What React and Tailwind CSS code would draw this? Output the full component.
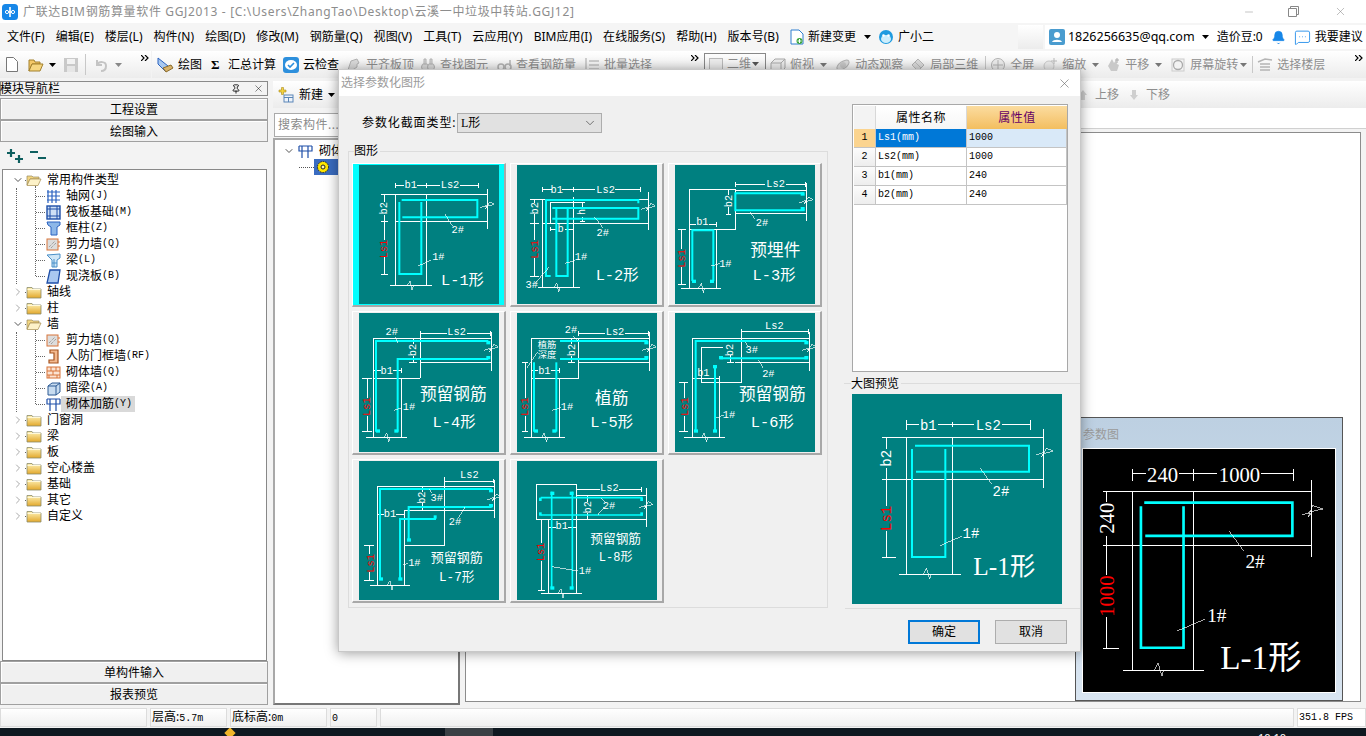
import React from "react";
import { X, Pin, ChevronDown, ChevronRight, Bell, MessageSquareMore, Minus } from "lucide-react";

const MONO = '"Liberation Mono","Noto Sans CJK SC",monospace';
const SERIF = '"Liberation Serif","Noto Sans CJK SC",serif';

const W = ({ d, s = 3 }) => <path d={d} fill="none" stroke="#fff" strokeWidth={s} shapeRendering="crispEdges" />;
const C = ({ d, s = 6 }) => <path d={d} fill="none" stroke="#00ffff" strokeWidth={s} strokeLinejoin="miter" />;
const B = ({ x, y, w = 12, h = 10 }) => <rect x={x} y={y} width={w} height={h} fill="#00ffff" />;
const T = ({ x, y, size = 31, fill = "#fff", anchor = "middle", rot, font = MONO, children }) => (
  <text
    x={x}
    y={y}
    fontSize={size}
    fill={fill}
    textAnchor={anchor}
    dominantBaseline="central"
    fontFamily={font}
    transform={rot ? `rotate(-90 ${x} ${y})` : undefined}
  >
    {children}
  </text>
);
const Brk = ({ x, y }) => <W d={`M${x - 22} ${y + 8}L${x} ${y}L${x - 6} ${y + 12}L${x + 6} ${y - 10}L${x + 20} ${y - 2}L${x - 8} ${y + 6}`} s={2} />;
const BrkB = ({ x, y }) => <W d={`M${x - 8} ${y}L${x} ${y - 14}L${x + 6} ${y + 14}L${x + 10} ${y}`} s={2} />;

const Thumb = ({ vb, children }) => (
  <svg viewBox={`${vb[0]} ${vb[1]} 420 417`} className="w-[140px] h-[139px] bg-[#008080] block">
    {children}
  </svg>
);

const L1 = () => (
  <Thumb vb={[42, 75]}>
    <W d="M151 128V143M245 128V143M400 128V143M151 135H178M216 135H284M344 135H400" />
    <W d="M107 163H428M151 163V437M245 163V437M151 245H428M428 148V268M135 437H260" />
    <W d="M107 245H130M107 403H130M107 163H130M118 163V185M118 224V300M118 352V403" />
    <C d="M170 180H397V232H172" />
    <C d="M163 186V402H229V186" />
    <W d="M300 222L322 258M220 378L258 360" s={2} />
    <BrkB x={195} y={437} />
    <Brk x={428} y={195} />
    <T x={197} y={135}>b1</T>
    <T x={315} y={135}>Ls2</T>
    <T x={118} y={205} rot>b2</T>
    <T x={118} y={327} rot fill="#ff0000">Ls1</T>
    <T x={338} y={270}>2#</T>
    <T x={280} y={352}>1#</T>
    <T x={288} y={422} size={46} anchor="start">L-1形</T>
  </Thumb>
);
const L2 = () => (
  <Thumb vb={[516, 75]}>
    <W d="M592 142V156M685 142V156M885 142V156M592 149H620M652 149H750M810 149H885" />
    <W d="M556 178H911M592 178V442M685 170V442M592 250H911M911 155V270M578 442H705" />
    <W d="M556 250H582M556 408H582M569 178V190M569 222V300M569 355V408" />
    <W d="M615 186H720M615 186V250M705 186H720M705 245H720M712 186V200M712 232V245M615 267H636M660 267H685M615 260V274" />
    <C d="M617 408H603V180H880V190" />
    <C d="M622 204H880V236H622" />
    <C d="M634 204V408H668V204" />
    <W d="M612 382L570 430M748 230L775 265M660 370L690 362" s={2} />
    <BrkB x={635} y={442} />
    <Brk x={911} y={200} />
    <T x={635} y={149}>b1</T>
    <T x={782} y={149}>Ls2</T>
    <T x={569} y={205} rot>b2</T>
    <T x={569} y={328} rot fill="#ff0000">Ls1</T>
    <T x={712} y={216} rot>h</T>
    <T x={647} y={268}>b</T>
    <T x={560} y={435}>3#</T>
    <T x={773} y={280}>2#</T>
    <T x={708} y={350}>1#</T>
    <T x={752} y={408} size={46} anchor="start">L-2形</T>
  </Thumb>
);
const L3 = () => (
  <Thumb vb={[21, 12]}>
    <W d="M202 63V77M412 63V77M202 70H290M355 70H412" />
    <W d="M65 85H202V206H65M65 85V381M145 206V381M202 88H415M202 156H415M415 65V180M40 381H160" />
    <W d="M174 85H190M174 160H190M182 85V102M182 138V160M65 183V197M145 183V197M65 190H85M122 190H145M30 205H55M30 370H55M40 205V265M40 318V370" />
    <C d="M73 360V208H136V360" />
    <C d="M408 97H202V148H410" />
    <B x={72} y={356} />
    <B x={126} y={356} />
    <B x={398} y={94} />
    <B x={398} y={138} />
    <W d="M245 152L262 175M130 315L155 308" s={2} />
    <BrkB x={100} y={381} />
    <Brk x={415} y={118} />
    <T x={103} y={184}>b1</T>
    <T x={323} y={68}>Ls2</T>
    <T x={182} y={120} rot>b2</T>
    <T x={43} y={292} rot fill="#ff0000">Ls1</T>
    <T x={282} y={185}>2#</T>
    <T x={172} y={308}>1#</T>
    <T x={322} y={272} size={50}>预埋件</T>
    <T x={318} y={344} size={46}>L-3形</T>
  </Thumb>
);
const L4 = () => (
  <Thumb vb={[42, 24]}>
    <W d="M226 78V92M436 78V92M226 85H305M365 85H436" />
    <W d="M85 100H440M85 100V397M170 220V397M85 220H226M226 85V220M226 172H440M440 80V197M63 397H185" />
    <W d="M193 172H215M204 100V118M204 152V172M85 197H108M145 197H170M170 190V205M52 220H80M52 380H80M66 220V280M66 332V380" />
    <C d="M93 380V108H430" />
    <C d="M158 380V162H430" />
    <B x={93} y={373} />
    <B x={148} y={373} />
    <B x={424} y={108} />
    <B x={424} y={153} />
    <W d="M150 95L160 115M148 316L172 308" s={2} />
    <BrkB x={125} y={397} />
    <Brk x={440} y={128} />
    <T x={335} y={82}>Ls2</T>
    <T x={140} y={80}>2#</T>
    <T x={204} y={135} rot>b2</T>
    <T x={125} y={197}>b1</T>
    <T x={66} y={305} rot fill="#ff0000">Ls1</T>
    <T x={192} y={307}>1#</T>
    <T x={325} y={270} size={50}>预留钢筋</T>
    <T x={327} y={354} size={46}>L-4形</T>
  </Thumb>
);
const L5 = () => (
  <Thumb vb={[516, 24]}>
    <W d="M700 78V92M910 78V92M700 85H780M840 85H910" />
    <W d="M560 100H914M700 100V220H560M560 100V397M644 220V397M700 172H914M914 80V197M537 397H660" />
    <W d="M670 172H690M680 100V118M680 152V172M560 197H580M618 197H644M644 190V205M530 172H550M530 380H548M540 172V280M540 332V380" />
    <C d="M567 380V172" />
    <C d="M634 172V380" />
    <C d="M645 108H908" />
    <C d="M645 162H908" />
    <B x={567} y={373} />
    <B x={622} y={373} />
    <B x={898} y={108} />
    <B x={898} y={153} />
    <W d="M578 140L545 190M684 92L698 108M622 316L648 308" s={2} />
    <BrkB x={598} y={397} />
    <Brk x={914} y={128} />
    <T x={810} y={82}>Ls2</T>
    <T x={678} y={76}>2#</T>
    <T x={680} y={135} rot>b2</T>
    <T x={598} y={197}>b1</T>
    <T x={606} y={122} size={28}>植筋</T>
    <T x={606} y={152} size={28}>深度</T>
    <T x={540} y={305} rot fill="#ff0000">Ls1</T>
    <T x={666} y={307}>1#</T>
    <T x={800} y={282} size={50}>植筋</T>
    <T x={800} y={354} size={46}>L-5形</T>
  </Thumb>
);
const L6 = () => (
  <Thumb vb={[990, 24]}>
    <W d="M1190 73V87M1390 73V87M1190 80H1390" />
    <W d="M1043 100H1394M1043 100V397M1190 72V232H1070V127H1135M1170 172H1394M1394 80V197M1123 212V397M1043 220H1123M1017 397H1140" />
    <W d="M1145 172H1166M1155 150V172M1003 232H1030M1003 380H1030M1017 232V280M1017 332V380" />
    <C d="M1052 380V108H1385" />
    <C d="M1110 380V182" />
    <C d="M1125 160H1388" />
    <B x={1047} y={373} />
    <B x={1104} y={373} />
    <B x={1104} y={180} />
    <B x={1122} y={153} />
    <B x={1378} y={108} />
    <B x={1378} y={153} />
    <W d="M1200 110L1210 125M1240 165L1255 190M1112 340L1136 330" s={2} />
    <BrkB x={1078} y={397} />
    <Brk x={1394} y={128} />
    <T x={1288} y={63}>Ls2</T>
    <T x={1155} y={135} rot>b2</T>
    <T x={1220} y={135}>3#</T>
    <T x={1270} y={207}>2#</T>
    <T x={1075} y={203}>b1</T>
    <T x={1020} y={305} rot fill="#ff0000">Ls1</T>
    <T x={1152} y={330}>1#</T>
    <T x={1282} y={270} size={50}>预留钢筋</T>
    <T x={1282} y={354} size={46}>L-6形</T>
  </Thumb>
);
const L7 = () => (
  <Thumb vb={[42, 468]}>
    <W d="M298 521V535M444 521V535M298 528H444" />
    <W d="M97 545H448M97 545V841M448 525V640M178 617H448M178 617V841M298 517V720H178M75 841H195" />
    <W d="M220 617H242M231 545V562M231 595V617M97 628H118M152 628H178M178 620V636M58 720H86M58 826H86M72 720V748M72 800V826" />
    <C d="M105 822V552H440" />
    <C d="M165 822V642H273" />
    <C d="M191 705V606H440" />
    <B x={102} y={817} />
    <B x={160} y={817} />
    <B x={186} y={700} />
    <B x={266} y={631} w={9} />
    <B x={432} y={552} />
    <B x={432} y={597} />
    <W d="M252 552L262 565M360 606L340 640M175 780L190 775" s={2} />
    <BrkB x={135} y={841} />
    <Brk x={448} y={577} />
    <T x={373} y={510}>Ls2</T>
    <T x={231} y={578} rot>b2</T>
    <T x={275} y={578}>3#</T>
    <T x={330} y={652}>2#</T>
    <T x={135} y={628}>b1</T>
    <T x={77} y={775} rot fill="#ff0000">Ls1</T>
    <T x={208} y={775}>1#</T>
    <T x={335} y={759} size={39}>预留钢筋</T>
    <T x={335} y={817} size={38}>L-7形</T>
  </Thumb>
);
const L8 = () => (
  <Thumb vb={[516, 468]}>
    <W d="M890 546V560M694 553H765M822 553H890" />
    <W d="M574 538H694V643H574ZM694 571H904M694 643H904M904 550V665M611 643V865M694 643V865M588 865H710" />
    <W d="M718 571H738M718 643H738M728 571V590M728 625V643M611 663V671M611 668H632M668 668H694M580 643H600M580 855H600M590 643V715M590 768V855" />
    <C d="M620 560V850" s={5} />
    <C d="M682 560V850" s={5} />
    <C d="M587 578H893" s={5} />
    <C d="M587 630H893" s={5} />
    <B x={616} y={844} />
    <B x={674} y={844} />
    <B x={616} y={560} />
    <B x={674} y={560} />
    <B x={582} y={578} w={8} />
    <B x={886} y={578} w={8} />
    <B x={582} y={622} w={8} />
    <B x={886} y={622} w={8} />
    <W d="M620 785L700 798M768 580L782 594M758 630L778 606" s={2} />
    <BrkB x={648} y={865} />
    <Brk x={904} y={600} />
    <T x={793} y={548}>Ls2</T>
    <T x={728} y={607} rot>b2</T>
    <T x={792} y={602}>2#</T>
    <T x={650} y={663}>b1</T>
    <T x={588} y={741} rot fill="#ff0000">Ls1</T>
    <T x={720} y={798}>1#</T>
    <T x={812} y={702} size={38}>预留钢筋</T>
    <T x={812} y={760} size={36}>L-8形</T>
  </Thumb>
);

const Preview = () => (
  <svg viewBox="21 57 630 630" className="w-[210px] h-[210px] block bg-[#008080]">
    <W d="M185 135V165M322 140V155M557 135V165M185 148H222M280 148H386M472 148H557" />
    <W d="M185 187V598M322 187V598M112 187H596M596 162V340M112 312H596M112 547H152M162 598H348" />
    <W d="M125 187V222M125 280V392M125 468V547" />
    <C d="M210 212H552V290H213" s={6} />
    <C d="M201 222V546H301V222" s={6} />
    <W d="M406 280L440 327M285 512L350 484" s={2} />
    <W d="M234 598L245 580L254 612L258 598" s={2} />
    <W d="M574 240L596 232L590 246L604 220L624 228L590 238" s={2} />
    <T x={250} y={152} size={42}>b1</T>
    <T x={430} y={152} size={42}>Ls2</T>
    <T x={125} y={250} size={42} rot>b2</T>
    <T x={125} y={430} size={42} rot fill="#ff0000">Ls1</T>
    <T x={468} y={352} size={42}>2#</T>
    <T x={378} y={476} size={42}>1#</T>
    <T x={385} y={572} size={76} anchor="start" font={SERIF}>L-1形</T>
  </svg>
);

const BlackPic = () => (
  <svg viewBox="23 120 757 730" className="w-[252px] h-[243px] block bg-black border border-white box-content -mt-[1px] -ml-[1px]">
    <W d="M172 180V215M355 180V215M655 180V215M172 195H212M312 195H426M558 195H655" />
    <W d="M172 247V785M355 247V785M82 247H710M710 213V445M82 410H710M82 718H132M142 785H387" />
    <W d="M95 247V278M95 380V498M95 625V718" />
    <C d="M207 281H652V381H210" s={8} />
    <C d="M197 292V717H325V292" s={8} />
    <W d="M462 367L505 425M305 667L388 632" s={2} />
    <W d="M238 785L248 762L260 803L265 785" s={2} />
    <W d="M680 317L710 312L700 325L712 290L745 300L700 310" s={2} />
    <T x={262} y={197} size={62} font={SERIF}>240</T>
    <T x={493} y={197} size={62} font={SERIF}>1000</T>
    <T x={95} y={328} size={62} rot font={SERIF}>240</T>
    <T x={95} y={562} size={62} rot fill="#ff0000" font={SERIF}>1000</T>
    <T x={540} y={458} size={58} font={SERIF}>2#</T>
    <T x={425} y={620} size={58} font={SERIF}>1#</T>
    <T x={435} y={745} size={100} anchor="start" font={SERIF}>L-1形</T>
  </svg>
);

/* ---------- small icons ---------- */
const Folder = ({ open }) => (
  <svg viewBox="0 0 16 14" className="w-[16px] h-[14px] shrink-0">
    <defs>
      <linearGradient id="fg" x1="0" y1="0" x2="0" y2="1">
        <stop offset="0" stopColor="#fff3b8" />
        <stop offset="1" stopColor="#e2a82c" />
      </linearGradient>
    </defs>
    {open ? (
      <>
        <path d="M1 3h5l1 1h6v2H4L1 12z" fill="#f3d681" stroke="#9a8b5f" strokeWidth=".7" />
        <path d="M4 6h11l-3 6.5H1z" fill="#fdf2c8" stroke="#a68e4f" strokeWidth=".7" />
      </>
    ) : (
      <>
        <path d="M1 2.5h5l1 1.5h8v9H1z" fill="url(#fg)" stroke="#8b8b6a" strokeWidth=".8" />
        <path d="M1.5 4.5h13" stroke="#fff8d8" strokeWidth="1" />
      </>
    )}
  </svg>
);
const Sq = ({ children }) => <svg viewBox="0 0 15 15" className="w-[15px] h-[15px] shrink-0">{children}</svg>;
const IGrid = () => <Sq><path d="M2 1v13M6 1v13M10 1v13M1 3h13M1 7h13M1 11h13" stroke="#2b62c0" strokeWidth="1.2" fill="none" /></Sq>;
const IRaft = () => <Sq><rect x="1" y="1" width="13" height="13" fill="#cfe0f5" stroke="#1f4fa8" strokeWidth="1.4" /><path d="M4 1v13M11 1v13M1 4h13M1 11h13" stroke="#1f4fa8" fill="none" /></Sq>;
const ICol = () => <Sq><path d="M1 1h13v3l-3 2v8H5V6L2 4z" fill="#8db7e8" stroke="#2b62c0" /></Sq>;
const IShear = () => <Sq><rect x="1" y="2" width="11" height="11" fill="#ddd" stroke="#d8753a" /><path d="M3 10l6-6M5 11l5-5" stroke="#888" strokeDasharray="1 1" /><path d="M13 4v2M13 8v2" stroke="#d8753a" /></Sq>;
const IBeam = () => <Sq><path d="M1 2l13-1v4l-3 2v7H6V7z" fill="#cfe6f7" stroke="#4a90c8" /><path d="M8 6v8M6 10h5" stroke="#4a90c8" /></Sq>;
const ISlab = () => <Sq><path d="M4 1h10l-2 13H1z" fill="#a9c8f0" stroke="#1f4fa8" strokeWidth="1.3" /></Sq>;
const IDoor = () => <Sq><path d="M4 1h8v13H3v-3h5V4H4z" fill="#f3b98f" stroke="#a65420" strokeWidth="1.2" /></Sq>;
const IBrick = () => <Sq><rect x="1" y="2" width="13" height="11" fill="#fbe3d2" stroke="#d8753a" /><path d="M1 6h13M1 10h13M5 2v4M10 2v4M7 6v4M3 10v3M11 10v3" stroke="#d8753a" fill="none" /></Sq>;
const IDark = () => <Sq><path d="M2 5l4-3h8v9l-4 3H2z" fill="#c8dcf0" stroke="#2c5a94" /><path d="M2 5h8v9M10 5l4-3" stroke="#2c5a94" fill="none" /></Sq>;
const IRebar = () => <Sq><path d="M1 2h13M2 7h12M4 2v12M10 2v12M1 2v5h13V2" stroke="#1f4fa8" strokeWidth="1.2" fill="none" /></Sq>;

const Dotted = ({ className }) => <div className={className} />;

const Row = ({ icon, name, suf, selected }) => (
  <div className="h-[16px] flex items-center relative pl-[33px]">
    <div className="w-[9px] border-t border-dotted border-[#666]" />
    <div className="ml-[1px]">{icon}</div>
    <div className={`h-[16px] flex items-center pl-[5px] pr-[3px] text-[12px] text-black ${selected ? "bg-[#d9d9d9]" : ""}`}>
      <span>{name}</span>
      <span className="font-['Liberation_Mono'] text-[10px]">{suf}</span>
    </div>
  </div>
);
const Node = ({ open, name }) => (
  <div className="h-[16px] flex items-center pl-[9px] text-[12px] text-black">
    {open ? <ChevronDown size={12} strokeWidth={2} className="text-[#555]" /> : <ChevronRight size={12} strokeWidth={2} className="text-[#aaa]" />}
    <div className="w-[1px] ml-[1px] border-t border-dotted border-[#666]" />
    <Folder open={open} />
    <span className="ml-[5px]">{name}</span>
  </div>
);

const Tree = () => (
  <div className="pt-[2px]">
    <div className="relative">
      <Node open name="常用构件类型" />
      <Dotted className="absolute left-[13px] top-[16px] bottom-0 border-l border-dotted border-[#666]" />
      <Dotted className="absolute left-[32px] top-[14px] bottom-[8px] border-l border-dotted border-[#666]" />
      <Row icon={<IGrid />} name="轴网" suf="(J)" />
      <Row icon={<IRaft />} name="筏板基础" suf="(M)" />
      <Row icon={<ICol />} name="框柱" suf="(Z)" />
      <Row icon={<IShear />} name="剪力墙" suf="(Q)" />
      <Row icon={<IBeam />} name="梁" suf="(L)" />
      <Row icon={<ISlab />} name="现浇板" suf="(B)" />
    </div>
    <Node name="轴线" />
    <Node name="柱" />
    <div className="relative">
      <Node open name="墙" />
      <Dotted className="absolute left-[13px] top-[16px] bottom-0 border-l border-dotted border-[#666]" />
      <Dotted className="absolute left-[32px] top-[14px] bottom-[8px] border-l border-dotted border-[#666]" />
      <Row icon={<IShear />} name="剪力墙" suf="(Q)" />
      <Row icon={<IDoor />} name="人防门框墙" suf="(RF)" />
      <Row icon={<IBrick />} name="砌体墙" suf="(Q)" />
      <Row icon={<IDark />} name="暗梁" suf="(A)" />
      <Row icon={<IRebar />} name="砌体加筋" suf="(Y)" selected />
    </div>
    {["门窗洞", "梁", "板", "空心楼盖", "基础", "其它", "自定义"].map((n) => (
      <Node key={n} name={n} />
    ))}
  </div>
);

const NavBtn = ({ children }) => (
  <div className="h-[22px] flex items-center justify-center pt-[1px] text-[12px] text-black bg-[#f0f0f0] border border-[#a0a0a0] shadow-[inset_1px_1px_0_#fff]">
    {children}
  </div>
);

/* ---------- toolbars ---------- */
const Caret = ({ className = "" }) => (
  <svg viewBox="0 0 7 4" className={`w-[7px] h-[4px] shrink-0 ${className}`}>
    <path d="M0 0h7L3.5 4z" fill="currentColor" />
  </svg>
);
const Tool = ({ icon, text, dis = true, className = "", caret, caretClass = "ml-[5px]" }) => (
  <div className={`flex items-center shrink-0 text-[12px] ${dis ? "text-[#8e8e8e]" : "text-black"} ${className}`}>
    {icon}
    <span className="ml-[4px] whitespace-nowrap">{text}</span>
    {caret && <Caret className={`${caretClass} ${dis ? "text-[#777]" : "text-black"}`} />}
  </div>
);
const G = ({ children }) => <svg viewBox="0 0 16 16" className="w-[16px] h-[16px] shrink-0">{children}</svg>;
const gs = { fill: "#dcdcdc", stroke: "#b4b4b4" };
const Gray = {
  flat: <G><path d="M2 13l3-9 6-2 2 4-2 1v3l-6 4z" {...gs} /></G>,
  find: <G><circle cx="5" cy="10" r="3.5" {...gs} /><circle cx="11" cy="10" r="3.5" {...gs} /><path d="M4 2h2v5H4zM10 2h2v5h-2z" {...gs} /></G>,
  view: <G><circle cx="5" cy="10" r="3" fill="none" stroke="#b4b4b4" strokeWidth="1.5" /><circle cx="12" cy="10" r="3" fill="none" stroke="#b4b4b4" strokeWidth="1.5" /><path d="M14 3v6" stroke="#b4b4b4" strokeWidth="1.5" /></G>,
  batch: <G><path d="M1 1h2v14H1zM5 3h10v2H5zM5 7h10v2H5zM5 11h10v2H5z" fill="#cfcfcf" /></G>,
  two: <G><rect x="1.5" y="2.5" width="13" height="12" fill="#eee" stroke="#bbb" /></G>,
  cube: <G><path d="M1 6l4-4h10v9l-4 4H1z" fill="#eee" stroke="#aaa" /><path d="M1 6h10v9M11 6l4-4" fill="none" stroke="#aaa" /></G>,
  orbit: <G><ellipse cx="8" cy="8" rx="7" ry="3.5" transform="rotate(-35 8 8)" {...gs} /><circle cx="8" cy="8" r="3" fill="#c8c8c8" /></G>,
  local: <G><path d="M2 8l6-6 6 6-6 6z" {...gs} /><path d="M5 5l6 6M8 2l6 6M2 8l6 6" stroke="#bbb" fill="none" /></G>,
  full: <G><circle cx="8" cy="8" r="6.5" fill="#eee" stroke="#b4b4b4" /><path d="M8 3v10M3 8h10" stroke="#b4b4b4" /></G>,
  zoom: <G><circle cx="7" cy="9" r="5" fill="#eee" stroke="#ccc" /><path d="M12 1v6M9 4h6" stroke="#bbb" /></G>,
  pan: <G><path d="M3 9l3 5h6l2-6-2-1-1-4-2 3-2-4z" fill="#c9c9c9" /><path d="M12 1v5M10 3h4" stroke="#aaa" /></G>,
  rot: <G><rect x="2" y="2" width="12" height="12" fill="#f2f2f2" stroke="#ccc" /><circle cx="8" cy="8" r="4.5" fill="none" stroke="#aaa" strokeWidth="1.3" /></G>,
  floor: <G><path d="M1 5l7-3 7 1M3 7h10M3 10h10M3 13h10" stroke="#b4b4b4" strokeWidth="1.4" fill="none" /></G>,
  up: <G><path d="M8 3l4 5H10v5H6V8H4z" fill="#cfcfcf" /></G>,
  down: <G><path d="M8 13l4-5H10V3H6v5H4z" fill="#cfcfcf" /></G>,
};
const Dbl = ({ className = "" }) => (
  <svg viewBox="0 0 8 6" className={`w-[8px] h-[6px] shrink-0 self-start mt-[4px] ${className}`}>
    <path d="M0 0l3 3-3 3M4 0l3 3-3 3" fill="none" stroke="#000" strokeWidth="1.2" />
  </svg>
);
const Sep = ({ className = "" }) => <div className={`w-px h-[17px] bg-[#c8c8c8] shrink-0 ${className}`} />;

const MenuItem = ({ children }) => <span className="mr-[11px] whitespace-nowrap tracking-[0.05px]">{children}</span>;

const Cell = ({ children, className = "" }) => (
  <div className={`h-[19px] flex items-center border-b border-r border-[#c4c4c4] pl-[2px] font-['Liberation_Mono','Noto_Sans_CJK_SC',monospace] text-[10px] text-black ${className}`}>
    {children}
  </div>
);

const Tile = ({ sel, children }) => (
  <div className={`w-[154px] h-[144px] pl-[6px] pt-[1px] border-t border-l border-white border-r-2 border-b-2 border-r-[#a8a8a8] border-b-[#a8a8a8] ${sel ? "bg-[#00ffff]" : "bg-[#f0f0f0]"}`}>
    {children}
  </div>
);

const Dialog = () => (
  <div className="absolute left-[338px] top-[69px] w-[743px] h-[583px] bg-[#f0f0f0] border border-[#c8c8c8] shadow-[0_1px_12px_rgba(0,0,0,0.4)] flex flex-col">
    <div className="h-[26px] bg-white flex items-center justify-between pl-[2px] pr-[8px] shrink-0 text-[12px] text-[#9b9b9b]">
      <span>选择参数化图形</span>
      <X size={15} strokeWidth={1} className="text-[#666]" />
    </div>
    <div className="flex h-[512px] shrink-0">
      <div className="w-[490px] ml-[9px] shrink-0">
        <div className="mt-[17px] ml-[14px] flex items-center h-[20px] text-[12px] text-black">
          <span className="w-[95px] whitespace-nowrap tracking-[0.9px]">参数化截面类型:</span>
          <div className="w-[145px] h-[20px] bg-[#e1e1e1] border border-[#adadad] flex items-center justify-between pl-[3px] pr-[4px]">
            <span><span className="font-['Liberation_Serif']">L</span>形</span>
            <ChevronDown size={14} strokeWidth={1.2} className="text-[#444]" />
          </div>
        </div>
        <div className="relative mt-[18px] h-[457px] w-[480px] border border-[#dcdcdc] pl-[3px] pt-[11px]">
          <span className="absolute -top-[8px] left-[5px] bg-[#f0f0f0] pr-[2px] text-[12px] leading-[14px] text-black">图形</span>
          <div className="grid grid-cols-[154px_154px_154px] gap-x-[4px] gap-y-[4px]">
            <Tile sel><L1 /></Tile>
            <Tile><L2 /></Tile>
            <Tile><L3 /></Tile>
            <Tile><L4 /></Tile>
            <Tile><L5 /></Tile>
            <Tile><L6 /></Tile>
            <Tile><L7 /></Tile>
            <Tile><L8 /></Tile>
          </div>
        </div>
      </div>
      <div className="flex-1 pt-[8px]">
        <div className="ml-[14px] w-[216px] h-[268px] border border-[#a8a8a8] p-[1px] bg-white">
          <div className="grid grid-cols-[22px_91px_100px]">
            <div className="h-[23px] bg-[#f3f3f3] border-r border-[#d8d8d8]" />
            <div className="h-[23px] flex items-center justify-center bg-gradient-to-b from-white to-[#f6f6f6] border-r border-[#d8d8d8] text-[12px] tracking-[0.5px] text-black">属性名称</div>
            <div className="h-[23px] flex items-center justify-center bg-gradient-to-b from-[#fbdc9f] to-[#f3be5e] text-[12px] tracking-[0.5px] text-[#660066]">属性值</div>
            <Cell className="justify-center !pl-0 bg-[#fbd48f] text-[#660066]">1</Cell>
            <Cell className="bg-[#0078d7] text-white">Ls1(mm)</Cell>
            <Cell className="bg-[#d9e9f8]">1000</Cell>
            <Cell className="justify-center !pl-0 bg-gradient-to-b from-[#fcfcfc] to-[#ededed]">2</Cell>
            <Cell>Ls2(mm)</Cell>
            <Cell>1000</Cell>
            <Cell className="justify-center !pl-0 bg-gradient-to-b from-[#fcfcfc] to-[#ededed]">3</Cell>
            <Cell>b1(mm)</Cell>
            <Cell>240</Cell>
            <Cell className="justify-center !pl-0 bg-gradient-to-b from-[#fcfcfc] to-[#ededed]">4</Cell>
            <Cell>b2(mm)</Cell>
            <Cell>240</Cell>
          </div>
        </div>
        <div className="relative ml-[6px] mt-[11px] border-t border-[#dcdcdc] pl-[8px] pt-[10px]">
          <span className="absolute -top-[7px] left-[7px] bg-[#f0f0f0] pr-[2px] text-[12px] leading-[14px] text-black">大图预览</span>
          <Preview />
        </div>
      </div>
    </div>
    <div className="ml-[506px] flex-1 border-t border-[#dcdcdc] pt-[11px] flex">
      <div className="ml-[63px] w-[72px] h-[24px] bg-[#e1e1e1] border-2 border-[#0078d7] flex items-center justify-center text-[12px] text-black">确定</div>
      <div className="ml-[15px] w-[72px] h-[24px] bg-[#e1e1e1] border border-[#adadad] flex items-center justify-center text-[12px] text-black">取消</div>
    </div>
  </div>
);

export default function App() {
  return (
    <div className="relative w-[1366px] h-[736px] overflow-hidden flex flex-col bg-[#f3f3f3] font-['Noto_Sans','Noto_Sans_CJK_SC',sans-serif] leading-none">
      {/* title bar */}
      <div className="h-[23px] bg-white flex items-center shrink-0 relative">
        <svg viewBox="0 0 16 16" className="w-[16px] h-[16px] ml-[2px] shrink-0">
          <rect width="16" height="16" rx="3.5" fill="#1787e8" />
          <path d="M8 3v10M3.5 8h9" stroke="#fff" strokeWidth="1.6" />
          <circle cx="5" cy="8" r="1.6" fill="#1787e8" stroke="#fff" />
          <circle cx="11" cy="8" r="1.6" fill="#1787e8" stroke="#fff" />
        </svg>
        <span className="ml-[5px] text-[12px] tracking-[0.65px] text-[#8d8d8d] whitespace-nowrap">
          广联达BIM钢筋算量软件 GGJ2013 - [C:\Users\ZhangTao\Desktop\云溪一中垃圾中转站.GGJ12]
        </span>
        <div className="ml-auto flex items-center text-[#888]">
          <Minus size={12} strokeWidth={1} className="mr-[33px]" />
          <svg viewBox="0 0 11 11" className="w-[11px] h-[11px] mr-[35px]">
            <path d="M.5 2.5h8v8h-8zM2.5 2.5v-2h8v8h-2" fill="none" stroke="currentColor" />
          </svg>
          <X size={13} strokeWidth={1} className="mr-[19px]" />
        </div>
      </div>
      {/* menu bar */}
      <div className="h-[28px] shrink-0 bg-[#f5f5f5] flex items-center pl-[7px] text-[12px] text-black">
        <MenuItem>文件(F)</MenuItem>
        <MenuItem>编辑(E)</MenuItem>
        <MenuItem>楼层(L)</MenuItem>
        <MenuItem>构件(N)</MenuItem>
        <MenuItem>绘图(D)</MenuItem>
        <MenuItem>修改(M)</MenuItem>
        <MenuItem>钢筋量(Q)</MenuItem>
        <MenuItem>视图(V)</MenuItem>
        <MenuItem>工具(T)</MenuItem>
        <MenuItem>云应用(Y)</MenuItem>
        <MenuItem>BIM应用(I)</MenuItem>
        <MenuItem>在线服务(S)</MenuItem>
        <MenuItem>帮助(H)</MenuItem>
        <MenuItem>版本号(B)</MenuItem>
        <svg viewBox="0 0 16 16" className="w-[16px] h-[16px] shrink-0 -ml-[1px]">
          <path d="M2 1h8l4 4v10H2z" fill="#fff" stroke="#2f7fd0" />
          <circle cx="10.5" cy="12" r="3" fill="#3ba53b" />
          <path d="M10.5 10v4M8.5 12h4" stroke="#fff" />
        </svg>
        <span className="ml-[3px] whitespace-nowrap">新建变更</span>
        <Caret className="ml-[8px]" />
        <svg viewBox="0 0 16 16" className="w-[16px] h-[16px] ml-[7px] shrink-0">
          <circle cx="8" cy="8" r="7" fill="#1f9be0" />
          <ellipse cx="8" cy="10" rx="5" ry="4" fill="#cdeefc" />
          <circle cx="5.5" cy="6.5" r="1.3" fill="#fff" />
          <circle cx="10.5" cy="6.5" r="1.3" fill="#fff" />
        </svg>
        <span className="ml-[4px] whitespace-nowrap">广小二</span>
        <div className="ml-[84px] w-[25px] h-[24px] shrink-0 bg-gradient-to-b from-white to-[#ececec]" />
        <div className="ml-[2px] flex-1 min-w-0 h-[24px] bg-white flex items-center pl-[4px]">
          <svg viewBox="0 0 16 16" className="w-[16px] h-[16px] shrink-0">
            <rect width="16" height="16" rx="2" fill="#4a9ccf" />
            <circle cx="8" cy="6" r="3" fill="#fff" />
            <path d="M3 13c1-3 9-3 10 0z" fill="#fff" />
          </svg>
          <span className="ml-[3px] text-[12.5px] whitespace-nowrap">1826256635@qq.com</span>
          <Caret className="ml-[7px]" />
          <span className="ml-[8px] whitespace-nowrap">造价豆:0</span>
          <Bell size={15} fill="#1787e8" strokeWidth={1} className="ml-[8px] text-[#1787e8] shrink-0" />
          <MessageSquareMore size={17} strokeWidth={1.2} className="ml-[8px] text-[#1787e8] shrink-0" />
          <span className="ml-[4px] whitespace-nowrap">我要建议</span>
        </div>
      </div>
      {/* toolbar */}
      <div className="h-[27px] shrink-0 flex items-center bg-gradient-to-b from-white to-[#ececec]">
        <div className="w-[152px] h-full flex items-center pl-[6px] shrink-0 border-r border-[#f3f3f3]">
          <svg viewBox="0 0 12 15" className="w-[12px] h-[15px] shrink-0">
            <path d="M.5.5h7l4 4v10H.5z" fill="#fff" stroke="#777" />
          </svg>
          <svg viewBox="0 0 16 14" className="w-[16px] h-[14px] ml-[10px] shrink-0">
            <path d="M1 2h5l1 2h5v2H4L1 13z" fill="#f4c868" stroke="#a2802c" />
            <path d="M4 6h11l-3 7H1z" fill="#f6d680" stroke="#a2802c" />
          </svg>
          <Caret className="ml-[5px]" />
          <svg viewBox="0 0 14 14" className="w-[14px] h-[14px] ml-[8px] shrink-0">
            <rect width="14" height="14" fill="#c9c9c9" />
            <rect x="3" y="1" width="8" height="5" fill="#f2f2f2" />
            <rect x="3" y="8" width="8" height="6" fill="#e6e6e6" />
          </svg>
          <Sep className="ml-[7px] h-[21px]" />
          <svg viewBox="0 0 14 14" className="w-[14px] h-[14px] ml-[8px] shrink-0">
            <path d="M3 2v5h5M3 7c2-4 9-4 9 1 0 3-2 5-5 5" fill="none" stroke="#c4c4c4" strokeWidth="2" />
          </svg>
          <Caret className="ml-[7px] text-[#888]" />
          <Dbl className="ml-[19px]" />
        </div>
        <div className="flex items-center flex-1 h-full pl-[4px] min-w-0">
          <Tool dis={false} text="绘图" icon={
            <svg viewBox="0 0 18 18" className="w-[18px] h-[18px] shrink-0">
              <path d="M2 2l10 8-3 5L2 8z" fill="#a8c8f0" stroke="#2b62c0" />
              <path d="M7 12l8-3 2 3-7 4z" fill="#d9b36a" stroke="#8a6a2a" />
            </svg>
          } />
          <Tool dis={false} className="ml-[9px]" text="汇总计算" icon={<span className="w-[9px] font-bold text-[13px] font-['Liberation_Serif'] mr-[4px]">Σ</span>} />
          <Tool dis={false} className="ml-[7px]" text="云检查" icon={
            <svg viewBox="0 0 16 16" className="w-[16px] h-[16px] shrink-0">
              <rect width="16" height="16" rx="3" fill="#2d8fdc" />
              <ellipse cx="8" cy="8" rx="6" ry="5" fill="#fff" />
              <path d="M5 8l2 2 4-4" fill="none" stroke="#2d8fdc" strokeWidth="1.6" />
            </svg>
          } />
          <Tool className="ml-[7px]" text="平齐板顶" icon={Gray.flat} />
          <Tool className="ml-[6px]" text="查找图元" icon={Gray.find} />
          <Tool className="ml-[8px]" text="查看钢筋量" icon={Gray.view} />
          <Tool className="ml-[8px]" text="批量选择" icon={Gray.batch} />
          <Dbl className="ml-[39px]" />
          <div className="ml-[5px] w-[62px] h-[20px] self-start mt-[2px] border border-[#888] border-b-0 flex items-center pl-[3px] pr-[6px] justify-between text-[12px] text-[#8e8e8e] shrink-0">
            <span className="flex items-center">{Gray.two}<span className="ml-[3px]">二维</span></span>
            <Caret className="text-[#555]" />
          </div>
          <Tool className="ml-[4px]" text="俯视" icon={Gray.cube} caret caretClass="ml-[6px]" />
          <Tool className="ml-[8px]" text="动态观察" icon={Gray.orbit} />
          <Tool className="ml-[7px]" text="局部三维" icon={Gray.local} />
          <Sep className="ml-[7px]" />
          <Tool className="ml-[4px]" text="全屏" icon={Gray.full} />
          <Tool className="ml-[8px]" text="缩放" icon={Gray.zoom} caret caretClass="ml-[6px]" />
          <Tool className="ml-[6px]" text="平移" icon={Gray.pan} caret caretClass="ml-[6px]" />
          <Tool className="ml-[8px]" text="屏幕旋转" icon={Gray.rot} caret caretClass="ml-[2px]" />
          <Sep className="ml-[5px]" />
          <Tool className="ml-[4px]" text="选择楼层" icon={Gray.floor} />
          <Dbl className="ml-[30px]" />
        </div>
      </div>
      <div className="h-[3px] shrink-0" />
      {/* main */}
      <div className="h-[626px] shrink-0 flex">
        <div className="w-[268px] shrink-0 flex flex-col h-[624px]">
          <div className="h-[15px] shrink-0 flex items-center border border-[#8a8a8a] text-[12px] text-black bg-[#f3f3f3]">
            <span className="-ml-[1px]">模块导航栏</span>
            <Pin size={10} strokeWidth={2} className="ml-auto mr-[12px]" />
            <X size={11} strokeWidth={1} className="mr-[3px]" />
          </div>
          <div className="h-[2px] shrink-0" />
          <NavBtn>工程设置</NavBtn>
          <NavBtn>绘图输入</NavBtn>
          <div className="h-[27px] shrink-0 flex items-center pl-[7px] bg-[#f3f3f3]">
            <svg viewBox="0 0 40 14" className="w-[40px] h-[14px]">
              <path d="M0 4h8M4 0v8M8 10h8M12 6v8" stroke="#0e5f5f" strokeWidth="2.2" />
              <path d="M23 3h8M31 9h8" stroke="#0e5f5f" strokeWidth="2.2" />
            </svg>
          </div>
          <div className="flex-1 ml-[2px] mr-[1px] border border-[#888] bg-white min-h-0">
            <Tree />
          </div>
          <NavBtn>单构件输入</NavBtn>
          <NavBtn>报表预览</NavBtn>
        </div>
        <div className="w-[187px] ml-[5px] shrink-0 flex flex-col h-[624px]">
          <div className="h-[27px] shrink-0 flex items-center pl-[5px] bg-gradient-to-b from-white to-[#ececec] text-[12px] text-black">
            <svg viewBox="0 0 16 16" className="w-[16px] h-[16px] shrink-0">
              <path d="M1 3h2.5V.5h2V3H8v2H5.5v2.5h-2V5H1z" fill="#f5d33e" stroke="#a88a1c" strokeWidth=".6" />
              <rect x="6" y="8" width="9" height="7" fill="#eef3fa" stroke="#5b86b8" />
              <path d="M6 10.5h9M10.5 10.5v4.5" stroke="#5b86b8" />
            </svg>
            <span className="ml-[5px]">新建</span>
            <Caret className="ml-[5px]" />
          </div>
          <div className="h-[5px] shrink-0" />
          <div className="h-[24px] shrink-0 ml-[1px] border border-[#aaa] bg-white flex items-center pl-[3px] text-[12px] tracking-[0.5px] text-[#8a8a8a]">搜索构件...</div>
          <div className="h-[1px] shrink-0" />
          <div className="flex-1 border-2 border-[#a8a8a8] border-b-[#777] border-r-[#777] bg-white pt-[3px]">
            <div className="h-[16px] flex items-center pl-[8px] text-[12px] text-black">
              <ChevronDown size={12} strokeWidth={2} className="text-[#555]" />
              <div className="ml-[3px]"><IRebar /></div>
              <span className="ml-[6px]">砌体加筋</span>
            </div>
            <div className="h-[16px] flex items-center pl-[24px]">
              <div className="w-[15px] border-t border-dotted border-[#555]" />
              <div className="w-[60px] h-[16px] bg-[#3a6cc0] flex items-center pl-[3px]">
                <svg viewBox="0 0 12 12" className="w-[12px] h-[12px]">
                  <circle cx="6" cy="6" r="5.5" fill="#ffe600" stroke="#222" strokeDasharray="1.5 1" />
                  <circle cx="6" cy="6" r="2" fill="#fff8b0" stroke="#222" />
                </svg>
              </div>
            </div>
          </div>
        </div>
        <div className="flex-1 ml-[3px] flex flex-col min-w-0 h-[624px]">
          <div className="h-[27px] shrink-0 flex items-center pl-[612px] bg-gradient-to-b from-white to-[#ececec] text-[12px] text-[#8e8e8e]">
            <Tool text="上移" icon={Gray.up} />
            <Tool className="ml-[7px]" text="下移" icon={Gray.down} />
          </div>
          <div className="h-[21px] shrink-0 bg-white border-b border-[#d0d0d0]" />
          <div className="h-[3px] shrink-0" />
          <div className="relative ml-[2px] mr-[5px] h-[570px] shrink-0 border border-[#8c8c8c] bg-white">
            <div className="absolute right-[17px] bottom-0 w-[268px] h-[284px] border border-[#555] bg-gradient-to-b from-[#bdd0e2] to-[#d9e5f1] pl-[7px] pt-[11px]">
              <div className="h-[20px] text-[12px] text-[#9a9a9a]">参数图</div>
              <BlackPic />
            </div>
          </div>
        </div>
      </div>
      {/* status bar */}
      <div className="h-[21px] shrink-0 flex items-stretch gap-[3px] pt-[1px] pb-[1px] text-[12px] text-black">
        {[
          [147, null],
          [77, ["层高:", "5.7m"]],
          [97, ["底标高:", "0m"]],
          [47, ["", "0"]],
        ].map(([w, t], i) => (
          <div key={i} style={{ width: w }} className="shrink-0 border border-[#dcdcdc] bg-gradient-to-b from-white to-[#f0f0f0] flex items-center pl-[1px]">
            {t && <span>{t[0]}<span className="font-['Liberation_Mono'] text-[10px]">{t[1]}</span></span>}
          </div>
        ))}
        <div className="flex-1 border border-[#dcdcdc] bg-gradient-to-b from-white to-[#f0f0f0]" />
        <div className="w-[69px] shrink-0 border border-[#dcdcdc] bg-white flex items-center pl-[1px] font-['Liberation_Mono'] text-[10px]">351.8 FPS</div>
      </div>
      {/* taskbar */}
      <div className="h-[8px] shrink-0 bg-[#0e1820] flex overflow-hidden">
        <div className="ml-[226px] mt-[1px] w-[8px] h-[8px] rotate-45 bg-[#f0b429]" />
        <div className="ml-[211px] w-[48px] h-full bg-[#3a4045]" />
        <span className="ml-[765px] mt-[4px] text-[11px] text-white whitespace-nowrap">10:10</span>
      </div>
      <Dialog />
    </div>
  );
}
